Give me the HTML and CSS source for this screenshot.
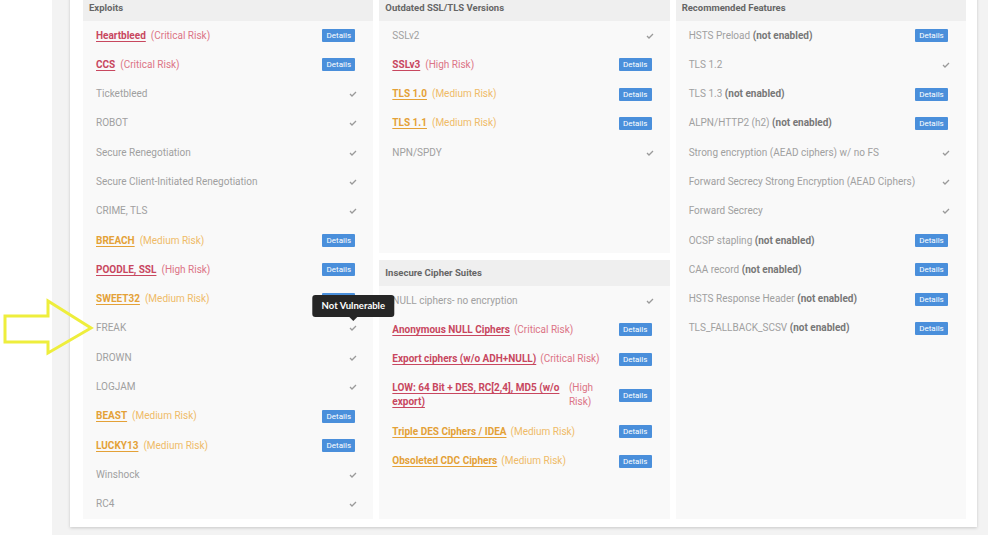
FILE: index.html
```html
<!DOCTYPE html>
<html lang="en">

<head>
    <meta charset="UTF-8">
    <meta name="viewport" content="width=device-width, initial-scale=1.0">
    <title>SSL Scan Results</title>
    <link rel="stylesheet" href="styles.css">
</head>

<body>

    <!-- **** Yellow pointer arrow **** -->
    <svg class="pointer" width="100" height="70" viewBox="0 0 100 70">
        <polygon points="5,26 48,26 48,11 91,38 48,63 48,52 5,52" fill="none" stroke="#eeee3c" stroke-width="3" stroke-linejoin="miter" />
    </svg>

    <div class="page">
        <div class="report">

            <!-- **** Exploits **** -->
            <div class="group">
                <div class="group-title">Exploits</div>
                <ul class="checks">
                    <li class="critical"><span class="label"><a href="#">Heartbleed</a><span class="risk">(Critical Risk)</span></span><button class="details">Details</button></li>
                    <li class="critical"><span class="label"><a href="#">CCS</a><span class="risk">(Critical Risk)</span></span><button class="details">Details</button></li>
                    <li><span class="label">Ticketbleed</span><span class="tick"><svg width="8" height="6" viewBox="0 0 8 6"><polyline points="1,3 3,5 7,1" /></svg></span></li>
                    <li><span class="label">ROBOT</span><span class="tick"><svg width="8" height="6" viewBox="0 0 8 6"><polyline points="1,3 3,5 7,1" /></svg></span></li>
                    <li><span class="label">Secure Renegotiation</span><span class="tick"><svg width="8" height="6" viewBox="0 0 8 6"><polyline points="1,3 3,5 7,1" /></svg></span></li>
                    <li><span class="label">Secure Client-Initiated Renegotiation</span><span class="tick"><svg width="8" height="6" viewBox="0 0 8 6"><polyline points="1,3 3,5 7,1" /></svg></span></li>
                    <li><span class="label">CRIME, TLS</span><span class="tick"><svg width="8" height="6" viewBox="0 0 8 6"><polyline points="1,3 3,5 7,1" /></svg></span></li>
                    <li class="medium"><span class="label"><a href="#">BREACH</a><span class="risk">(Medium Risk)</span></span><button class="details">Details</button></li>
                    <li class="critical"><span class="label"><a href="#">POODLE, SSL</a><span class="risk">(High Risk)</span></span><button class="details">Details</button></li>
                    <li class="medium"><span class="label"><a href="#">SWEET32</a><span class="risk">(Medium Risk)</span></span><button class="details">Details</button></li>
                    <li><span class="label">FREAK</span><span class="tick"><span class="tip">Not Vulnerable</span><svg width="8" height="6" viewBox="0 0 8 6"><polyline points="1,3 3,5 7,1" /></svg></span></li>
                    <li><span class="label">DROWN</span><span class="tick"><svg width="8" height="6" viewBox="0 0 8 6"><polyline points="1,3 3,5 7,1" /></svg></span></li>
                    <li><span class="label">LOGJAM</span><span class="tick"><svg width="8" height="6" viewBox="0 0 8 6"><polyline points="1,3 3,5 7,1" /></svg></span></li>
                    <li class="medium"><span class="label"><a href="#">BEAST</a><span class="risk">(Medium Risk)</span></span><button class="details">Details</button></li>
                    <li class="medium"><span class="label"><a href="#">LUCKY13</a><span class="risk">(Medium Risk)</span></span><button class="details">Details</button></li>
                    <li><span class="label">Winshock</span><span class="tick"><svg width="8" height="6" viewBox="0 0 8 6"><polyline points="1,3 3,5 7,1" /></svg></span></li>
                    <li><span class="label">RC4</span><span class="tick"><svg width="8" height="6" viewBox="0 0 8 6"><polyline points="1,3 3,5 7,1" /></svg></span></li>
                </ul>
            </div>

            <!-- **** Protocols and ciphers **** -->
            <div class="stack">
                <div class="group short">
                    <div class="group-title">Outdated SSL/TLS Versions</div>
                    <ul class="checks">
                        <li><span class="label">SSLv2</span><span class="tick"><svg width="8" height="6" viewBox="0 0 8 6"><polyline points="1,3 3,5 7,1" /></svg></span></li>
                        <li class="critical"><span class="label"><a href="#">SSLv3</a><span class="risk">(High Risk)</span></span><button class="details">Details</button></li>
                        <li class="medium"><span class="label"><a href="#">TLS 1.0</a><span class="risk">(Medium Risk)</span></span><button class="details">Details</button></li>
                        <li class="medium"><span class="label"><a href="#">TLS 1.1</a><span class="risk">(Medium Risk)</span></span><button class="details">Details</button></li>
                        <li><span class="label">NPN/SPDY</span><span class="tick"><svg width="8" height="6" viewBox="0 0 8 6"><polyline points="1,3 3,5 7,1" /></svg></span></li>
                    </ul>
                </div>

                <div class="group">
                    <div class="group-title">Insecure Cipher Suites</div>
                    <ul class="checks ciphers">
                        <li><span class="label">NULL ciphers- no encryption</span><span class="tick"><svg width="8" height="6" viewBox="0 0 8 6"><polyline points="1,3 3,5 7,1" /></svg></span></li>
                        <li class="critical"><span class="label"><a href="#">Anonymous NULL Ciphers</a><span class="risk">(Critical Risk)</span></span><button class="details">Details</button></li>
                        <li class="critical"><span class="label"><a href="#">Export ciphers (w/o ADH+NULL)</a><span class="risk">(Critical Risk)</span></span><button class="details">Details</button></li>
                        <li class="critical"><span class="label"><a href="#">LOW: 64 Bit + DES, RC[2,4], MD5 (w/o export)</a><span class="risk">(High Risk)</span></span><button class="details">Details</button></li>
                        <li class="medium"><span class="label"><a href="#">Triple DES Ciphers / IDEA</a><span class="risk">(Medium Risk)</span></span><button class="details">Details</button></li>
                        <li class="medium"><span class="label"><a href="#">Obsoleted CDC Ciphers</a><span class="risk">(Medium Risk)</span></span><button class="details">Details</button></li>
                    </ul>
                </div>
            </div>

            <!-- **** Recommended Features **** -->
            <div class="group">
                <div class="group-title">Recommended Features</div>
                <ul class="checks features">
                    <li><span class="label">HSTS Preload <b>(not enabled)</b></span><button class="details">Details</button></li>
                    <li><span class="label">TLS 1.2</span><span class="tick"><svg width="8" height="6" viewBox="0 0 8 6"><polyline points="1,3 3,5 7,1" /></svg></span></li>
                    <li><span class="label">TLS 1.3 <b>(not enabled)</b></span><button class="details">Details</button></li>
                    <li><span class="label">ALPN/HTTP2 (h2) <b>(not enabled)</b></span><button class="details">Details</button></li>
                    <li><span class="label">Strong encryption (AEAD ciphers) w/ no FS</span><span class="tick"><svg width="8" height="6" viewBox="0 0 8 6"><polyline points="1,3 3,5 7,1" /></svg></span></li>
                    <li><span class="label">Forward Secrecy Strong Encryption (AEAD Ciphers)</span><span class="tick"><svg width="8" height="6" viewBox="0 0 8 6"><polyline points="1,3 3,5 7,1" /></svg></span></li>
                    <li><span class="label">Forward Secrecy</span><span class="tick"><svg width="8" height="6" viewBox="0 0 8 6"><polyline points="1,3 3,5 7,1" /></svg></span></li>
                    <li><span class="label">OCSP stapling <b>(not enabled)</b></span><button class="details">Details</button></li>
                    <li><span class="label">CAA record <b>(not enabled)</b></span><button class="details">Details</button></li>
                    <li><span class="label">HSTS Response Header <b>(not enabled)</b></span><button class="details">Details</button></li>
                    <li><span class="label">TLS_FALLBACK_SCSV <b>(not enabled)</b></span><button class="details">Details</button></li>
                </ul>
            </div>

        </div>
    </div>

</body>

</html>
```

FILE: styles.css
```css
/* Reset CSS */
* {
    margin: 0;
    padding: 0;
    box-sizing: border-box;
}

:root {
    --critical: #c8475f;
    --critical-soft: #dc7486;
    --medium: #e4a137;
    --medium-soft: #efbb68;
    --muted: #a0a0a0;
}

body {
    position: relative;
    background: #fff;
    font-family: Roboto, "Liberation Sans", sans-serif;
    font-size: 10px;
    overflow: hidden;
}

/* Yellow pointer */
.pointer {
    position: absolute;
    left: 0;
    top: 290px;
    z-index: 10;
}

.page {
    margin-left: 52px;
    height: 540px;
    background: #f3f3f3;
    padding: 0 11px 0 18px;
}

.report {
    display: grid;
    grid-template-columns: repeat(3, 1fr);
    gap: 6px;
    height: 532px;
    margin-top: -5px;
    padding: 0 11px 9px 13px;
    background: #fff;
    box-shadow: 0 1px 3px rgba(0, 0, 0, 0.18);
}

.stack {
    display: flex;
    flex-direction: column;
    gap: 7px;
}

.group {
    display: flex;
    flex-direction: column;
    flex: 1;
    background: #f9f9f9;
}

.group.short {
    flex: none;
    height: 258px;
}

.group-title {
    height: 26px;
    line-height: 26px;
    padding-left: 6px;
    background: #efefef;
    color: #666;
    font-size: 9.5px;
    font-weight: 700;
}

.checks {
    list-style: none;
}

.checks li {
    display: flex;
    justify-content: space-between;
    align-items: center;
    padding: 7.65px 18px 7.65px 13px;
    line-height: 14px;
    color: var(--muted);
}

.label {
    display: flex;
    gap: 5px;
}

.ciphers .label {
    gap: 4px;
    padding-right: 8px;
}

.features .label {
    display: block;
}

.features .label b {
    color: #777;
}

.checks a {
    font-weight: 700;
    text-decoration: underline;
    text-underline-offset: 2px;
}

.critical a {
    color: var(--critical);
}

.critical .risk {
    color: var(--critical-soft);
}

.medium a {
    color: var(--medium);
}

.medium .risk {
    color: var(--medium-soft);
}

.details {
    flex: none;
    width: 33px;
    height: 13px;
    border: none;
    border-radius: 1px;
    background: #4a8fdb;
    color: #fff;
    font-family: Roboto, "Liberation Sans", sans-serif;
    font-size: 8px;
    line-height: 13px;
}

.tick {
    position: relative;
    display: flex;
    margin-right: -2px;
}

.tick svg polyline {
    fill: none;
    stroke: #9a9a9a;
    stroke-width: 1.3;
}

/* Tooltip */
.tip {
    position: absolute;
    bottom: calc(100% + 8px);
    left: 50%;
    transform: translateX(-50%);
    z-index: 5;
    padding: 0 9px;
    height: 22px;
    line-height: 22px;
    border-radius: 3px;
    background: #262626;
    color: #fff;
    font-family: Lato, "Noto Sans", sans-serif;
    font-size: 9.5px;
    font-weight: 700;
    white-space: nowrap;
}

.tip::after {
    content: '';
    position: absolute;
    left: 50%;
    top: 100%;
    margin-left: -4px;
    border: 4px solid transparent;
    border-top-color: #262626;
}
```
